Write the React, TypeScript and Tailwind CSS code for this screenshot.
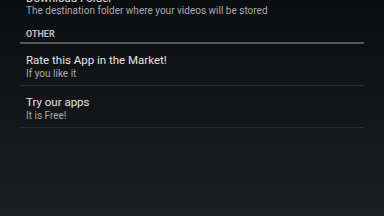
export default function App() {
  return (
    <div className="relative h-[216px] w-[384px] overflow-hidden bg-gradient-to-b from-[#0c0d0f] to-[#1c1e21] font-['Roboto',sans-serif]">
      <div className="px-[20px]">
        <div className="-mt-[9px] px-[6px] pb-[2px]">
          <p className="text-[11.5px] leading-[14px] text-[#e4e4e4]">Download Folder</p>
          <p className="text-[10px] leading-[12px] text-[#a9abad]">The destination folder where your videos will be stored</p>
        </div>
        <div className="border-b-2 border-[#55595d] px-[6px] pt-[9px] pb-[2px]">
          <p className="text-[9px] font-bold leading-[12px] text-[#bcbec0]">OTHER</p>
        </div>
        <Pref title="Rate this App in the Market!" summary="If you like it" />
        <Pref title="Try our apps" summary="It is Free!" />
      </div>
    </div>
  );
}

function Pref({ title, summary }: { title: string; summary: string }) {
  return (
    <div className="border-b border-[#2a2d30] px-[6px] pt-[8px] pb-[5px]">
      <p className="text-[11.5px] leading-[16px] text-[#e4e4e4]">{title}</p>
      <p className="text-[10px] leading-[12px] text-[#a9abad]">{summary}</p>
    </div>
  );
}
